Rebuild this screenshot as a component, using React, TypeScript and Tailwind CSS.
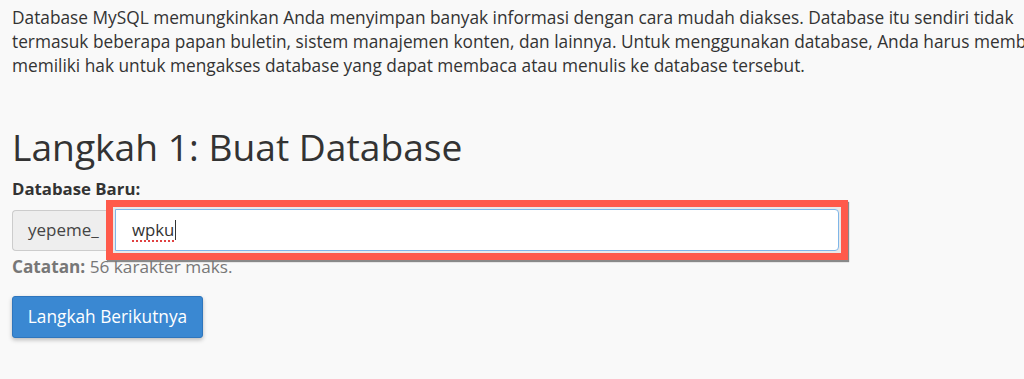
export default function App() {
  return (
    <div
      className="min-h-[379px] overflow-hidden bg-[#f9f9f9] px-3 text-[#333]"
      style={{ fontFamily: '"Open Sans", "Liberation Sans", sans-serif' }}
    >
      <p className="whitespace-nowrap pt-[6px] text-[17.3px] leading-[24px]">
        Database MySQL memungkinkan Anda menyimpan banyak informasi dengan cara mudah diakses. Database itu sendiri tidak
        <br />
        termasuk beberapa papan buletin, sistem manajemen konten, dan lainnya. Untuk menggunakan database, Anda harus memberikan
        <br />
        memiliki hak untuk mengakses database yang dapat membaca atau menulis ke database tersebut.
      </p>

      <h1 className="mt-[47px] text-[37.2px] leading-[44px]">Langkah 1: Buat Database</h1>

      <label className="mt-[10px] block text-[16.8px] font-bold leading-[20px]">Database Baru:</label>

      <div className="mt-[1px] flex items-center">
        <span className="flex h-[41px] w-[94px] items-center rounded-l-[4px] border border-r-0 border-[#ccc] bg-[#eee] pl-[15px] text-[17px] text-[#444]">
          yepeme_
        </span>
        <div className="flex h-[60px] w-[742px] items-center border-[7px] border-[#ff5a4b] bg-[#e9e9e9] px-[2px] shadow-[1px_2px_1px_rgba(0,0,0,0.45)]">
          <div className="flex h-[42px] flex-1 items-center rounded-r-[4px] border border-[#7fb6e8] bg-white pl-[16px] text-[16.8px] text-[#333]">
            <span className="underline decoration-[#e04040] decoration-dotted decoration-2 underline-offset-[4px]">wpku</span>
            <span className="ml-px h-[20px] w-px bg-[#333]" />
          </div>
        </div>
      </div>

      <p className="mt-[-3px] text-[17.2px] leading-[20px] text-[#777]">
        <span className="font-bold">Catatan:</span> 56 karakter maks.
      </p>

      <button className="mt-[19px] h-[42px] w-[191px] rounded-[3px] border border-[#2f76bd] bg-[#3a88d2] text-[17.3px] text-white shadow-[0_2px_4px_rgba(0,0,0,0.25)]">
        Langkah Berikutnya
      </button>
    </div>
  );
}
